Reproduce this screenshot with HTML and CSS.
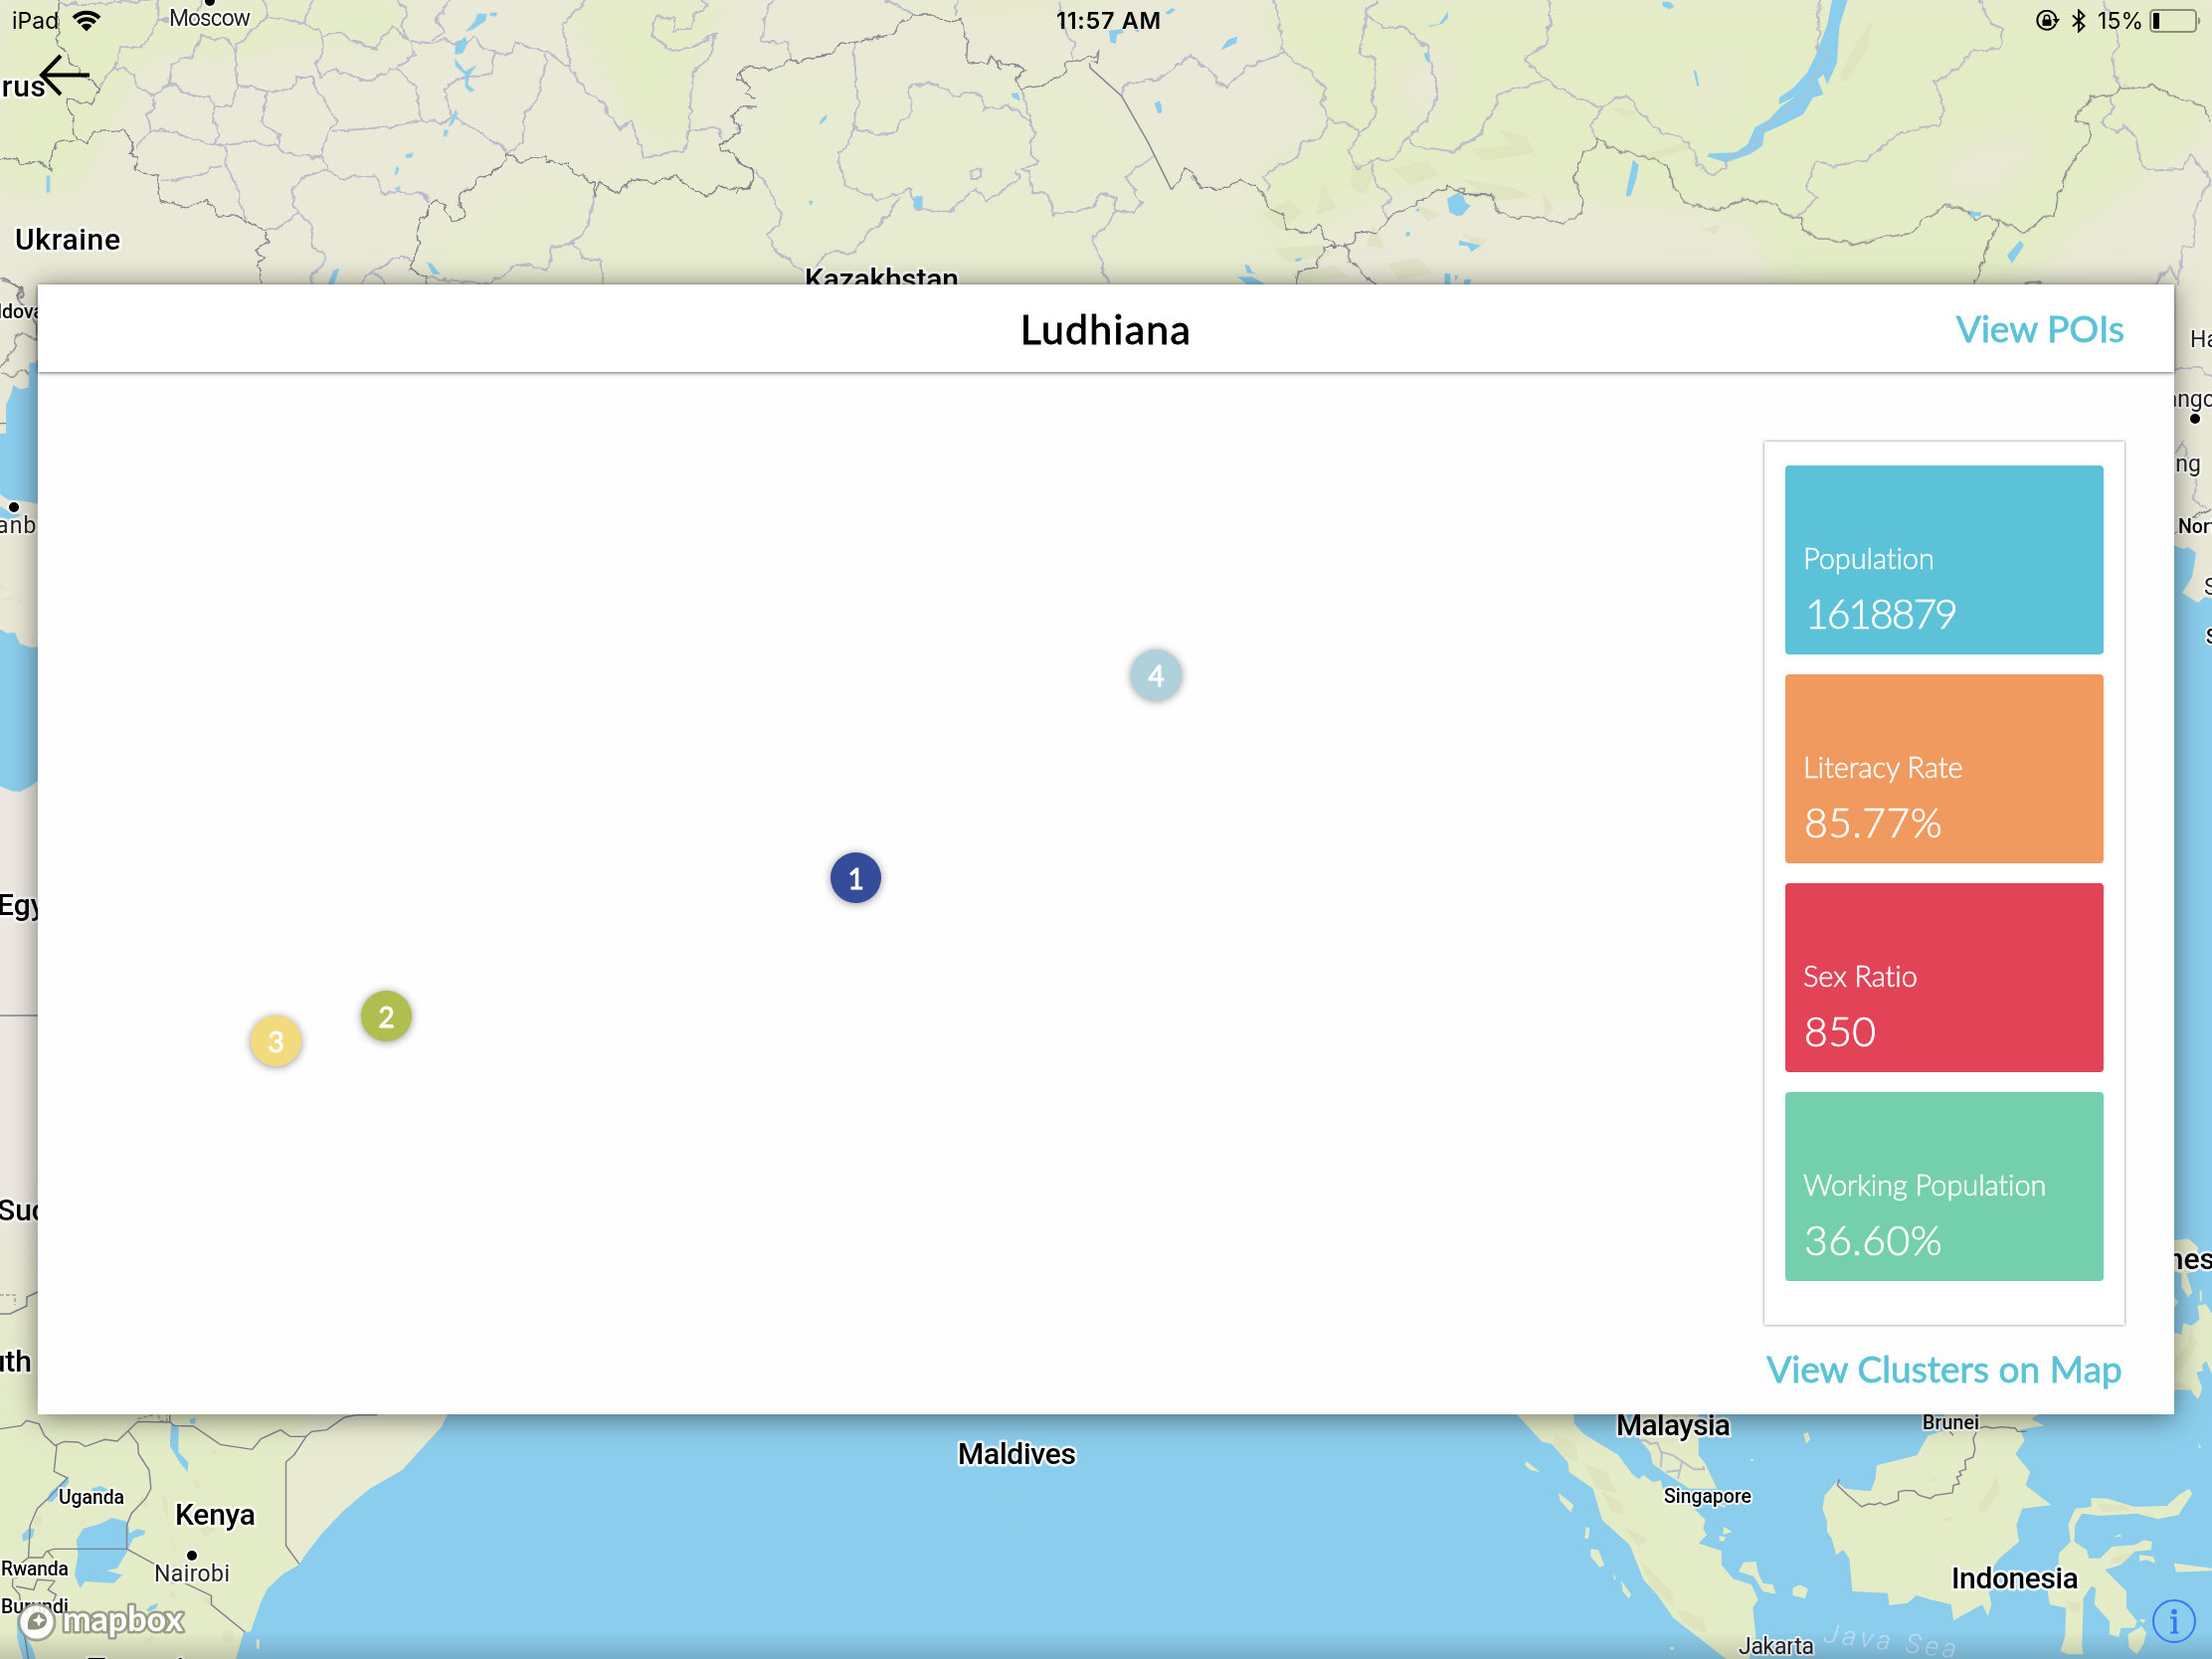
FILE: index.html
```html
<!DOCTYPE html>
<html lang="en">
<head>
<meta charset="utf-8">
<title>Ludhiana</title>
<link rel="stylesheet" href="styles.css">
</head>
<body>
<div class="screen">
  <svg class="map" width="2224" height="1668" viewBox="0 0 2224 1668">
    <defs>
      <filter id="rough" x="0" y="0" width="2224" height="1668" filterUnits="userSpaceOnUse">
        <feTurbulence type="fractalNoise" baseFrequency="0.1" numOctaves="2" seed="4" result="n"/>
        <feDisplacementMap in="SourceGraphic" in2="n" scale="8" xChannelSelector="R" yChannelSelector="G"/>
      </filter>
      <filter id="soft" x="-20%" y="-20%" width="140%" height="140%"><feGaussianBlur stdDeviation="16"/></filter>
      <linearGradient id="foot" x1="0" y1="0" x2="0" y2="1"><stop offset="0" stop-color="#000" stop-opacity="0"/><stop offset="1" stop-color="#000" stop-opacity=".15"/></linearGradient>
      <linearGradient id="sahel" x1="0" y1="0" x2="0" y2="1"><stop offset="0" stop-color="#ede8e2"/><stop offset=".3" stop-color="#e9e9d6"/><stop offset="1" stop-color="#e4ecc5"/></linearGradient>
    </defs>
    <rect class="land" width="2224" height="1668"/>

    <!-- vegetation -->
    <g class="green" filter="url(#soft)">
      <path d="M0,0H420L400,50L300,40L230,60L150,50L120,100L80,190L0,200Z"/>
      <path d="M560,0H740L700,60L690,150L640,130L600,50Z"/>
      <path class="pale" d="M420,240L520,180L740,150L780,60L900,90L1080,60L1180,170L1330,240V300H420Z"/>
      <path d="M1260,0H2224V130L2100,220L2020,300H1790L1760,220L1600,200L1400,190L1300,240L1240,160L1340,130Z"/>
      <path d="M860,0H1110V18H980Z"/>
    </g>
    <g class="sand" filter="url(#soft)">
      <path d="M1170,80L1270,70L1320,130L1240,180L1190,170Z"/>
      <path d="M1400,60L1470,50L1450,110L1410,130Z"/>
      <path d="M1960,150L2060,130L2020,190L1960,210Z"/>
      <path d="M1680,90L1760,60L1720,110Z"/>
    </g>
    <g class="relief">
      <path d="M1360,160l22,14-10,22-14-8zM1400,170l36-8 12,14-30,10zM1330,185l14,24-22,8zM1270,215l26-14 14,12-22,18zM1280,250l50-4 10,10-44,8zM1380,225l14,26-20-4zM1420,205l30 10-14 8zM1300,275l40-8 16,12-50 4zM1480,150l40-4 20 8-50 8zM1470,180l50 8 20 10-40 4zM1505,130l30 8 10 20-20-8zM1550,190l12 20-8 10zM1655,155l40-12 5 6-40 12zM1850,75l14-28 18-26-6 30-20 32zM1620,108l26 4-10 8zM1710,230l20-4-6 10zM1470,235l26 6-10 10zM1396,265l30-6 14 16-34 6z"/>
    </g>

    <!-- regional borders -->
    <g class="region" filter="url(#rough)">
      <g transform="scale(.48469 .33333)">
        <path d="M330,0L328,60 310,110 298,142 250,142 240,205 215,240 207,270M240,205L275,220 292,272 320,290 350,255 358,190 400,170 417,110 475,120 488,165 492,260 480,318 448,318 433,290 400,290 350,250M320,290L320,320 305,345 312,390 282,450M312,390L365,400 440,438 470,435 520,425 575,440 590,460 662,475 682,400 698,360 650,260 650,230 615,232 605,270 555,275 520,265 492,260M555,275L545,370 578,410 578,440M448,318L442,365 455,405 442,438M122,12H205L250,5 328,0M328,60H400L420,0M548,0L556,50 520,100 492,135 488,165M556,50L630,70 650,0M630,70L662,90 670,160 655,195 665,235 695,208 762,245 820,205 860,165 850,125 832,75 845,35 825,0M662,110L700,100 780,150 815,75 850,125 895,130 925,120 965,135 985,105 1000,145 1055,165 1070,130 1135,155 1182,205 1175,130 1168,75 1215,0M895,120L920,100 905,60 935,0M1135,165L1115,300 1085,350 1085,430 1052,462M1025,150L1018,222 945,240 920,275 940,350 990,395 1052,455M820,205L862,260 875,365 920,370 940,350M690,395L745,390 820,380 875,360M1182,205L1215,275 1245,300 1285,390 1310,370 1335,475 1400,460 1420,455 1430,390 1435,220 1470,180 1485,105 1440,140 1390,155 1350,100 1360,55 1400,55 1395,95 1430,85 1445,35 1468,20 1455,0M1430,395L1490,385 1500,420M665,475L682,515 710,540 780,525 795,585 870,580 890,605M682,515L635,530 605,570 615,640 585,685 550,693M615,640L650,685 645,740 675,770 670,800 645,830 650,857M470,440L465,490 490,560 512,665M335,550L385,535 460,500M1232,590L1220,680 1190,730 1145,750 1135,815 1075,795 1015,855 880,838M1190,730L1210,780 1245,785 1250,857M750,857L755,835 790,805 835,770 855,785M780,820L795,857"/>
      </g>
      <g transform="translate(740 0) scale(.48469 .33333)">
        <path d="M78,0L60,50 55,125 108,128 115,185M243,130L250,250 255,315 242,385 300,408 330,400 365,330 360,260 420,250 450,290 505,280 515,330 565,320 610,365 618,400 610,470 628,485 590,515 610,515 615,580 650,590 660,648 740,625 755,580 790,600 785,630 825,645 842,610 810,530 868,465M242,385L235,440 212,460 225,555 295,605 365,568 372,628 440,642 500,568 520,605 590,540 580,515M338,595L320,640 275,705 245,760 185,765 165,820M790,630L765,690 740,715 760,800 770,857M0,390L10,380M45,510L75,590 98,655 68,705 75,745 110,785 140,825M310,0L370,45M460,0L452,50M670,0L682,90 700,130 697,190M590,270L605,330 615,370M800,290L805,255 870,240 910,205 940,165 975,205 1015,265 1060,205 1135,160 1130,90 1115,0M1135,160L1190,215 1225,270 1215,310 1232,360 1290,390 1295,415 1270,455 1290,510 1315,485 1365,480 1390,415 1440,350 1455,280 1435,150 1385,80 1340,85 1305,40 1330,0M1305,40L1295,160 1330,180 1320,300 1330,345 1290,410M1232,360L1210,420 1175,430 1165,475 1090,530 1110,555 1100,580M1390,415L1410,440 1490,458 1540,410 1568,340M1315,490L1330,555 1360,600 1340,620 1350,660M490,515L510,510 505,540 490,540Z"/>
      </g>
      <g transform="translate(1464 0) scale(.48469 .33333)">
        <path d="M190,0L197,50 185,140 145,165 140,180 190,245 115,270 92,285 75,340 50,405 0,452M190,245L250,295 305,320 355,285 380,340 435,405 465,410 495,460 500,495 522,525 560,508 562,478 610,450 635,390 720,295 770,160 750,145 755,0M305,320L280,380 292,420M1085,0L1095,45 1135,90 1130,145 1075,155 1040,210 990,250 1015,320 1000,375 915,405 850,485 785,500 745,490 725,570 750,595 710,650M1345,0L1375,130 1360,190 1380,270M1355,290L1365,320 1340,370 1370,400 1385,380 1410,410 1420,500 1440,515 1505,510 1525,470 1565,540 1530,640 1528,740 1510,745 1495,857M1445,857L1482,805 1495,845"/>
      </g>
      <path d="M2186,371h12l8-3 8,2 10,10M2186,455l10-10 2,14 10,26-2,18 12,8"/>
    </g>

    <!-- national borders -->
    <g class="nation" filter="url(#rough)">
      <g transform="scale(.48469 .33333)">
        <path d="M122,0V90L115,115 135,155 145,185 165,205 170,232 195,245 207,270 190,310 140,298 138,320 150,350 152,400 160,420 120,430 105,470 105,515 90,490 40,495 35,475 0,485M160,420L180,430 195,400 260,395 275,435 270,465 285,475 278,515 325,525 333,605 390,625 430,605 455,655 490,650 550,695 555,730 530,755 548,775 535,800 545,857M0,835L20,850 43,865 43,900M850,813L868,740 865,710 870,665 890,650 890,615 905,602 920,620 940,670 965,650 950,610 955,580 985,560 990,535 1020,525 1050,480 1052,460 1080,490 1130,465 1135,490 1180,490 1190,520 1230,550 1235,595 1240,545 1285,590 1310,540 1355,550 1405,530 1440,575 1465,595 1490,565 1550,570 1565,515 1540,490 1490,440 1535,395 1520,350 1545,320 1568,322M1568,205L1540,200 1530,240 1558,260 1545,285 1568,295M850,813L885,830 880,857"/>
      </g>
      <g transform="translate(740 0) scale(.48469 .33333)">
        <path d="M0,580L28,565 38,515 0,480M0,245L15,245 10,215 30,200 75,208 110,185 200,165 210,135 243,128 325,103 345,70 370,45 412,45 440,70 465,55 480,130 478,190 520,185 530,170 550,210 540,185 600,210 580,240 590,268 630,260 685,215 687,190 745,170 752,155 750,190 733,190"/>
        <path d="M903,572L920,545 930,510 950,520 950,545 970,568 1020,568 1045,542 1080,560 1098,600 1098,625 1135,650 1145,690 1190,705 1210,675 1220,715 1245,745 1280,735 1285,705 1330,700 1350,660 1410,615 1450,577 1475,573 1478,560 1510,585 1568,590M1245,745L1220,745 1205,805 1165,820 1158,857M1265,740L1275,795 1325,857"/>
      </g>
      <g transform="translate(1464 0) scale(.48469 .33333)">
        <path d="M0,570L15,568 15,585 75,590 80,625 92,648 130,655 180,655 215,678 260,645 265,600 243,545 265,462 285,450 292,420 345,462 370,462 440,500 450,565 480,615 540,635 595,602 660,615 685,652 717,657 720,690 745,720 775,720 825,740 880,715 950,700 965,665 1015,622 1045,628 1080,662 1108,648 1145,682 1180,702 1215,658 1240,652 1245,605 1270,510 1290,465 1318,415 1313,372 1285,365 1285,345 1322,290 1350,290 1380,268 1445,260 1510,303 1550,320 1568,370M1127,665L1097,770 1085,805 1085,832 1073,845 1073,857M1180,857L1195,853 1210,857"/>
      </g>
      <g transform="translate(0 250) scale(.33333 .38265)">
        <path d="M0,80L20,88 60,100 55,130 70,150 110,195 110,235 60,225 42,235 42,265 12,295 0,312M0,325L30,335 70,317 95,338"/>
      </g>
      <path d="M2186,536l6-6M2204,521l20-10"/>
    </g>
    <path class="nation" transform="translate(740 0) scale(.48469 .33333)" d="M733,190L735,205 800,290 855,430 903,572"/>

    <!-- west edge: Black Sea, Mediterranean, Egypt, Sudan -->
    <rect x="0" y="1180" width="40" height="260" fill="url(#sahel)"/>
    <g transform="translate(0 250) scale(.33333 .38265)">
      <rect class="desert" x="0" y="1400" width="120" height="1035"/>
      <path class="water" d="M120,285L105,300 88,300 86,365 60,370 40,358 32,385 18,410 18,485 0,486V645L25,660 70,663 120,672ZM0,677L25,690 65,700 30,712 0,705ZM0,1000L20,1010 45,1008 60,1038 95,1048 120,1045V1395L90,1413 60,1427 35,1425 0,1412Z"/>
      <path class="relief" d="M0,880l20,14-20,4zM5,920l40-2-30,8zM50,915l20,18-20-4zM90,1030l15-14-2,20z"/>
      <path class="nation" d="M0,459H18M0,2015H120"/>
    </g>
    <path class="nation" d="M0,1321h10l17-8v-9l11-5h4"/>
    <path class="nation dash" d="M0,1302h15v10"/>

    <!-- east edge: Korea, Pacific, Philippines -->
    <path class="water" d="M2180,546L2195,552 2200,550 2208,556 2204,580 2194,596 2205,603 2210,606 2217,600 2224,602V1668H2180Z"/>
    <g transform="translate(2150 850) scale(.33333 .38265)">
      <path class="isle" d="M90,1040L150,1033 180,1055 175,1120 145,1125 163,1175 150,1187 130,1160 130,1125 108,1120 90,1100ZM108,1185l12,15-12,15zM178,1210l25-5 19,25V1390L205,1355 192,1365 195,1380 175,1385 192,1425 185,1453 165,1450 160,1430 108,1430V1280L130,1285 135,1255 160,1262 185,1245ZM185,1170h6v28h-6z"/>
      <path class="relief" d="M108,1350l40-40 10-40 20,40-30,50-40,30zM108,1405l50,20-4,12-46-15z"/>
    </g>

    <!-- Indian Ocean -->
    <path class="water" d="M451,1420L444,1434 404,1478 371,1497 345,1519 325,1540 312,1554 301,1573 285,1582 269,1597 262,1611 252,1640 245,1641 237,1668H2224V1400H451Z"/>
    <path class="veg" d="M0,1415H451L444,1434 404,1478 371,1497 345,1519 325,1540 312,1554 301,1573 285,1582 269,1597 262,1611 252,1640 245,1641 237,1668H0Z"/>
    <path class="coast" d="M310,1420H449L444,1434 404,1478 371,1497 345,1519 325,1540 301,1571L289,1554V1470Z"/>
    <g transform="translate(0 1410) scale(.35714 .33333)">
      <path class="relief" d="M400,280l15,10v30l-25-10zM455,280l15,10 5,60-15-30zM560,380l30-20 15,25-30,20zM100,345l20-10-5,35-20,5zM480,400l20,60-10-10zM540,230l25,10-5,30zM595,150l15,-10-5,20zM470,580l20-15 5,30zM560,585l40,5-10,20zM625,690l25-5 10,30-25,10zM410,715l20-10-5,20z"/>
      <path class="water" d="M482,65L503,70 502,150 530,180 528,210 505,180 478,130ZM535,52l15-6v18h-15zM190,225l5,15-48,60-15-3 8-25zM62,400l18-20 17,2-5,25-27,12zM215,415L235,380 285,365 315,348 360,360 365,395 385,382 410,388 405,400 375,410 358,450 330,500 300,508 345,520 320,545 240,540 225,560 210,520 220,460ZM258,260l25-8 22,12-20,8-25,0zM412,625l15-12 18-8-5,15-20,12zM48,645l20,10 10,60 15,30 8,30H65L48,710ZM36,532h14l-5,-8zM480,542l8,8v-14z"/>
      <path class="isle" d="M722,715l8,0v28h-8z"/>
      <g class="nation">
        <path d="M0,80L60,70 75,55 110,65 125,100 155,130 180,118 220,120 240,133 295,112 330,117 388,58 480,60 490,70 545,72 620,127 710,142 735,110 790,83 817,103 862,103 877,88 920,83 970,45 1005,38H1062M862,103L828,158 805,180V432L843,488M360,85L388,125 390,155 420,205 425,260 410,290 370,335 357,370V442H152L130,450 120,468 80,468 85,370 105,320 135,290 190,228 152,208 160,130M357,442L435,488M520,545L595,583 595,610 690,693M80,468L60,485M135,450L150,470M36,532L35,555 55,580 60,640M45,555L95,565 105,535 155,538M155,538L135,565 158,580 150,600M60,640L80,774M478,38V60"/>
        <path class="dash" d="M388,50L430,38M445,38l5,18h20v-18"/>
      </g>
    </g>

    <!-- Sumatra, Malay peninsula, Borneo, Sulawesi -->
    <g transform="translate(1500 1400) scale(.46173 .33333)">
      <path class="isle" d="M52,62H178L180,95 200,125 235,155 275,188 305,245 320,262 330,248 350,270 368,265 372,290 395,300 440,350 465,385 460,410 468,430 450,455 500,478 500,520 525,562 565,580 580,625 568,650 575,740 560,804H510L460,750 395,680 360,610 330,565 300,460 240,385 220,290 168,240 165,210 130,155 108,148ZM330,62H450V190L465,215 490,290H430L380,245 350,215 345,180 320,140ZM490,340l18,-2v10zM75,208L105,240 85,235 72,220ZM145,303L178,340 172,363 148,325ZM215,472L232,475 245,522 235,527 215,495ZM205,405l8,5-3,30h-8zM262,548l8,10-2,10zM282,568L303,610 298,622 285,600ZM505,405l18,15-20,10zM495,432l15,5-5,12-10-2zM537,540L548,512 575,510 580,545 590,575 612,580 618,608 590,600 570,555ZM655,590L670,580 688,592 682,622 655,612ZM678,125l10-5 5,20-8,15zM563,202h7v5h-7zM388,768h8v8h-8z"/>
      <path class="isle" d="M985,62H1195L1175,80 1203,100 1150,112 1160,145 1140,185 1172,240 1162,280 1218,340 1155,350 1142,400 1148,450 1105,500 1085,540 1082,600 1088,640 1080,675 1068,640 1005,688 1000,640 955,625 925,612 905,635 865,642 862,605 785,600 778,500 765,475 750,490 740,440 730,420 730,390 720,350 725,310 750,270 770,290 825,298 835,260 838,220 925,190 950,130 985,115ZM1305,318L1340,320 1400,345 1470,342 1495,310 1518,290 1525,305 1495,370 1450,382 1405,365 1325,372 1285,365 1270,400 1268,450 1295,475 1300,500 1325,500 1350,465 1400,460 1420,445 1438,450 1435,475 1400,480 1370,520 1335,535 1360,570 1382,600 1382,650 1405,690 1400,710 1370,710 1365,738 1345,730 1345,690 1312,640 1315,590 1305,585 1288,620 1285,765 1288,790 1255,790 1238,780 1248,735 1250,650 1215,640 1210,600 1230,570 1235,485 1260,450 1255,400 1270,350 1305,345ZM1410,490l30,5 5,20-20-10-15,5zM1485,515L1568,530V538L1490,542ZM1353,435l15-7 3,8zM1385,730l30-25 10,20-5,30-15,35-18-20zM1410,685h14l-6,12zM1525,0h20l-8,20zM1538,150l7,20-5-3z"/>
      <path class="relief" d="M140,130l40,20 10,60-40-20-20-40zM200,215l50,25 20,60-40-10zM240,300l40,30 10,40-30-10zM290,410l50,30-20,30zM320,500l70,100 10,50-50-60zM400,650l60,30 10,50-50-30zM1060,340l30-60 10-40 5,60-30,60-15,0zM980,380l30-8-20,20zM1350,500l50-20-20,30-30,10zM1250,630l30,5v30l-20-5zM960,255l10,10-12,5zM1320,335l60,5 10,15-60,5z"/>
      <g class="nation"><path d="M757,262L752,280 775,310 805,345 820,336 835,338 845,332 855,340 870,333 885,325 885,300 900,295 920,297 930,310 955,320 965,310 1003,303 1005,280 1018,275 1012,255 1022,250 1018,238 1032,232 1030,205 1048,195 1052,170 1048,140 1055,120M1055,110L1075,103 1090,108 1110,104 1140,108 1145,118H1165M1005,130l-8-12"/></g>
      <g class="region"><path d="M320,145L335,145 345,155 360,152 370,185 368,225M370,180L395,190 440,232 462,232 460,222M415,205L405,260M380,240l28-5"/></g>
    </g>

    <!-- lakes -->
    <g class="water">
      <g transform="scale(.48469 .33333)"><path d="M965,95L985,65 990,42 1010,42 1008,62 980,90ZM1018,38l14,0-3,12-14-4zM965,110L970,130 960,160 943,165 945,135ZM943,175L965,215 990,195 975,225 970,255 985,272 975,278 965,262 965,225 945,200ZM945,330l5,12-12,35-8,5zM922,390l8,3-3,18-8,0zM842,465l15-5-3,15-12,2zM822,500l6,8-5,20-4,0zM830,560l-1,15-13,-5zM97,530h7l-1,50h-7zM885,790l10,5 18,32-15,0zM692,815l12-5-12,50h-12z"/></g>
      <g transform="translate(740 0) scale(.48469 .33333)"><path d="M890,38l15-14 7,6-15,15zM773,92L800,88 805,98 790,105 788,132 777,128ZM826,90l12,0-4,8zM1005,152L1020,120 1040,110 1038,130ZM868,312l10-8 5,15v22h-8zM1434,78l25-6 18-38v20l-12,18-25,8zM1426,160l10,0 4,30-8,-6zM570,282l15-2 5,25-15-10zM173,372l5-15 11-12-2,15-12,15zM150,605l10,2-5,14zM372,592h15v38l-20-5zM1475,600L1500,580 1512,610 1525,622 1510,630 1495,652 1480,640ZM1410,630l8,0-3,12zM1390,700l8-2 0,12-8,4zM1500,725L1545,740 1525,760 1518,742 1500,740ZM1160,780l15-3-5,12-10,0zM1055,797l10,5 5,18 10,6-20-3zM1040,835L1070,835 1098,857H1060ZM1470,825l12,0v32h-12zM1490,830h8l-5,20zM1510,842h15l-3,15h-12z"/></g>
      <g transform="translate(1464 0) scale(.48469 .33333)">
        <path d="M780,0H812L795,80 790,190 770,255 762,225 750,240 762,285 740,295 720,345 665,385 640,400 635,440 610,465 560,490 520,472 525,463 580,460 605,435 620,385 650,360 675,320 705,290 670,315 670,295 700,265 728,220 745,170 770,75ZM428,5l15,0 10,15-10,8-15-10zM492,210l6,5 6,43-4,2zM367,482l12,15-5,40-12,55-10,0 5-40zM1068,632l8,8 14,0-2,12-12,0-8,8zM1170,725l8,15-25,55-10-25zM0,585l15,5 5,25 10,5-18,30H0z"/>
        <path class="lake-line" d="M750,145L770,160 720,295 635,390 610,450 562,478"/>
      </g>
    </g>

    <!-- place labels -->
    <g class="dots"><circle cx="211" cy="1" r="5"/><circle cx="14" cy="510" r="5"/><circle cx="2207" cy="421" r="5"/><circle cx="193" cy="1564" r="5"/></g>
    <g class="city">
      <text x="170" y="26" textLength="82">Moscow</text>
      <text x="-33" y="536" textLength="90">Istanbul</text>
      <text x="2202" y="349">Harbin</text>
      <text x="2149" y="409">Changchun</text>
      <text x="2213" y="474" text-anchor="end">Shenyang</text>
      <text x="2216" y="598">Seoul</text>
      <text x="155" y="1590" textLength="76">Nairobi</text>
      <text x="1748" y="1663" textLength="76">Jakarta</text>
    </g>
    <g class="small">
      <text x="44" y="320" text-anchor="end">Moldova</text>
      <text x="2190" y="536">North Korea</text>
      <text x="2218" y="647">South Korea</text>
      <text x="1933" y="1437" textLength="57">Brunei</text>
      <text x="1673" y="1511" textLength="88">Singapore</text>
      <text x="59" y="1512" textLength="66">Uganda</text>
      <text x="1" y="1584" textLength="68">Rwanda</text>
      <text x="1" y="1622" textLength="68">Burundi</text>
    </g>
    <g class="country">
      <text x="-60" y="97" textLength="106">Belarus</text>
      <text x="15" y="251" textLength="106">Ukraine</text>
      <text x="809" y="291" textLength="155">Kazakhstan</text>
      <text x="-3" y="920">Egypt</text>
      <text x="-3" y="1227">Sudan</text>
      <text x="32" y="1379" text-anchor="end">South</text>
      <text x="2227" y="1276" text-anchor="end">Philippines</text>
      <text x="1625" y="1443" textLength="115">Malaysia</text>
      <text x="1962" y="1597" textLength="128">Indonesia</text>
      <text x="963" y="1472" textLength="119">Maldives</text>
      <text x="176" y="1533" textLength="81">Kenya</text>
      <text x="88" y="1688" textLength="112">Tanzania</text>
    </g>
    <text class="sea" textLength="134" transform="translate(1833 1651) rotate(7)">Java Sea</text>
    <path class="atoll" d="M1008,1502h18M1016,1538h10"/>
    <rect x="0" y="1642" width="2224" height="26" fill="url(#foot)"/>
  </svg>

  <header class="status">
    <div class="status-left">
      <span>iPad</span>
      <svg width="30" height="22" viewBox="0 0 30 22"><path d="M2,8.2A18.500,18.500 0 0 1 28,8.2M6.500,12.900A12,12 0 0 1 23.500,12.900" fill="none" stroke="#000" stroke-width="4"/><path d="M9.600,16A7.600,7.600 0 0 1 20.400,16L15,21.500Z"/></svg>
    </div>
    <div class="time">11:57 AM</div>
    <div class="status-right">
      <svg width="24" height="22" viewBox="0 0 24 22"><path d="M19.700,13.800A9.500,9.500 0 1 1 20.300,9" fill="none" stroke="#000" stroke-width="2"/><path d="M16.800,9H24L20.500,14Z"/><rect x="6.500" y="9.500" width="9" height="6.500" rx="1"/><path d="M8.300,10V8a2.700,2.700 0 0 1 5.400,0v2" fill="none" stroke="#000" stroke-width="1.500"/></svg>
      <svg width="14" height="24" viewBox="0 0 14 24"><path d="M1,6.500L12.500,17 7,22.500V1.500L12.500,7 1,17.500" fill="none" stroke="#000" stroke-width="2"/></svg>
      <span class="charge">15%</span>
      <svg width="52" height="24" viewBox="0 0 52 24"><rect x="1" y="1" width="46" height="22" rx="4" fill="none" stroke="#8b8e7c" stroke-width="2"/><rect x="4" y="4" width="6" height="16" rx="1"/><path d="M49,8a4.500,4.500 0 0 1 0,8z" fill="#8b8e7c"/></svg>
    </div>
  </header>
  <nav class="nav">
    <svg width="54" height="44" viewBox="0 0 54 44"><path d="M52,22.500H4M23,3L4,22.500 23,42" fill="none" stroke="#000" stroke-width="4"/></svg>
  </nav>

  <main class="card">
    <div class="card-head">
      <h1 class="title">Ludhiana</h1>
      <a class="link pois">View POIs</a>
    </div>
    <div class="card-body">
      <section class="plot">
        <span class="pin pin-1">1</span>
        <span class="pin pin-2">2</span>
        <span class="pin pin-3">3</span>
        <span class="pin pin-4">4</span>
      </section>
      <aside class="side">
        <div class="stats">
          <div class="tile blue"><span class="label">Population</span><span class="value tight">1618879</span></div>
          <div class="tile orange"><span class="label">Literacy Rate</span><span class="value">85.77%</span></div>
          <div class="tile red"><span class="label">Sex Ratio</span><span class="value">850</span></div>
          <div class="tile green-tile"><span class="label">Working Population</span><span class="value">36.60%</span></div>
        </div>
        <a class="link clusters">View Clusters on Map</a>
      </aside>
    </div>
  </main>

  <svg class="mapbox" width="180" height="48" viewBox="0 0 180 48">
    <circle cx="22" cy="24" r="18" fill="#fff" fill-opacity=".92" stroke="#8c907a" stroke-width="3" stroke-opacity=".8"/>
    <path d="M13,31C12,20 16,14 24,14A8.500,8.500 0 0 1 32,23C31,30 23,33 13,31Z" fill="#8c907a"/>
    <path d="M24,15.500l1.900,4.600L30.500,22l-4.600,1.900L24,28.500l-1.900-4.600L17.500,22l4.600-1.900Z" fill="#fff"/>
    <text x="48" y="33" textLength="121" lengthAdjust="spacingAndGlyphs">mapbox</text>
  </svg>
  <svg class="info" width="46" height="46" viewBox="0 0 46 46"><circle cx="23" cy="23" r="21" fill="none" stroke="#3478f6" stroke-width="2"/><circle cx="23" cy="13.500" r="2.800" fill="#3478f6"/><path d="M19,19.500h5.500V34M19,34.500h8.500" fill="none" stroke="#3478f6" stroke-width="2"/><path d="M23.500,19v15" stroke="#3478f6" stroke-width="3"/></svg>
</div>
</body>
</html>
```
FILE: styles.css
```css
* { box-sizing: border-box; }
body { margin: 0; background: #fff; }
.screen {
  position: relative;
  width: 2224px;
  height: 1668px;
  overflow: hidden;
  font-family: Lato, "Liberation Sans", sans-serif;
}

/* map */
.map { position: absolute; inset: 0; }
.map path { vector-effect: non-scaling-stroke; }
.land { fill: #eae9d7; }
.green path { fill: #e4ecc5; }
.green .pale { fill: #e7ebcf; }
.sand path { fill: #eae8d7; }
.desert { fill: #ede8e2; }
.veg { fill: #e4ebc7; }
.coast { fill: #e8ead1; }
.isle { fill: #e4ebc7; }
.relief { fill: #d9deb6; fill-opacity: .5; }
.water { fill: #8bcdec; }
.region path { fill: none; stroke: #babbcb; stroke-width: 2; }
.nation path, path.nation { fill: none; stroke: #80818c; stroke-width: 1.4; }
.nation .dash, path.dash { stroke-dasharray: 4 2; stroke-opacity: .7; }
.lake-line { fill: none; stroke: #b1bfd4; stroke-width: 1.6; }
.dots circle { fill: #000; stroke: #fff; stroke-opacity: .8; stroke-width: 4; paint-order: stroke; }
.map text {
  font-family: Roboto, "Open Sans", sans-serif;
  stroke: #fff;
  stroke-opacity: .85;
  stroke-linejoin: round;
  paint-order: stroke;
}
.city text { font-size: 23px; fill: #222; stroke-width: 4px; }
.small text { font-size: 19.5px; font-weight: 500; fill: #000; stroke-width: 4px; }
.country text { font-size: 30px; font-weight: 500; fill: #000; stroke-width: 5px; }
.map .sea { font-size: 27px; font-style: italic; font-weight: 300; fill: #c4e1f8; stroke: none; }
.atoll { stroke: #9fc6de; stroke-width: 1; stroke-dasharray: 3 2; }

/* status bar */
.status {
  position: relative;
  display: grid;
  grid-template-columns: 1fr auto 1fr;
  align-items: center;
  height: 41px;
  padding: 0 11px 0 12px;
  font-family: Inter, sans-serif;
  font-size: 23px;
  line-height: 28px;
}
.status-left, .status-right { display: flex; align-items: center; }
.status-left { gap: 13px; }
.status-right { justify-content: flex-end; gap: 12px; }
.time { font-size: 23.5px; font-weight: 600; letter-spacing: .7px; padding-left: 5px; }
.charge { margin-right: -6px; letter-spacing: 0; }
.nav { position: relative; display: flex; height: 245px; padding: 12px 0 0 38px; }

/* card */
.card {
  position: relative;
  display: flex;
  flex-direction: column;
  width: 2148px;
  height: 1136px;
  margin-left: 38px;
  background: #fefefe;
  box-shadow: 0 3px 26px rgba(0, 0, 0, .5);
}
.card-head {
  display: grid;
  grid-template-columns: 1fr auto 1fr;
  align-items: center;
  height: 88px;
  padding: 0 50px;
  background: #fff;
  box-shadow: 0 1px 4px rgba(0, 0, 0, .6);
}
.title {
  grid-column: 2;
  margin: 0;
  padding-top: 2px;
  font-size: 41px;
  font-weight: 400;
  line-height: 50px;
  letter-spacing: 1.3px;
  -webkit-text-stroke: .8px #000;
}
.link {
  color: #5bc2d7;
  font-size: 37px;
  line-height: 46px;
  letter-spacing: .05px;
  white-space: nowrap;
  -webkit-text-stroke: .8px #5bc2d7;
}
.pois { justify-self: end; }
.card-body { display: flex; flex: 1; padding-right: 50px; }
.plot { position: relative; flex: 1; }
.side { display: flex; flex-direction: column; align-items: center; width: 362px; padding-top: 70px; }
.stats {
  display: flex;
  flex-direction: column;
  gap: 20px;
  width: 362px;
  height: 888px;
  padding: 24px 21px;
  background: #fff;
  box-shadow: 0 0 3px rgba(0, 0, 0, .5);
}
.tile {
  display: flex;
  flex-direction: column;
  justify-content: flex-end;
  gap: 13px;
  height: 190px;
  padding: 0 18px 16px;
  border-radius: 4px;
  color: #fff;
}
.blue { background: #5bc2d7; }
.orange { background: #f19a60; }
.red { background: #e24357; }
.green-tile { background: #74cfac; }
.label { font-size: 29px; line-height: 36px; letter-spacing: -.1px; white-space: nowrap; font-weight: 300; -webkit-text-stroke: .5px #fff; }
.value { padding-left: 1px; font-size: 41px; line-height: 50px; letter-spacing: .4px; font-weight: 300; -webkit-text-stroke: .6px #fff; }
.tight { letter-spacing: -2.1px; padding-left: 2px; }
.clusters { margin-top: 21px; }

/* cluster pins */
.pin {
  position: absolute;
  width: 51px;
  height: 51px;
  border-radius: 50%;
  color: #fff;
  font-size: 28px;
  font-weight: 400;
  line-height: 53px;
  text-align: center;
  -webkit-text-stroke: .9px #fff;
  box-shadow: 0 1px 9px rgba(0, 0, 0, .42);
}
.pin-1 { left: 797px; top: 483px; background: #344c9a; }
.pin-2 { left: 325px; top: 622px; background: #b0be50; }
.pin-3 { left: 214px; top: 647px; background: #f2da7e; }
.pin-4 { left: 1099px; top: 279px; background: #aed1db; }

/* overlays */
.mapbox { position: absolute; left: 15px; top: 1607px; }
.mapbox text {
  font-family: Lato, sans-serif;
  font-size: 34px;
  font-weight: 700;
  fill: #fff;
  stroke: #8c907a;
  stroke-opacity: .85;
  stroke-width: 5px;
  stroke-linejoin: round;
  paint-order: stroke;
}
.info { position: absolute; left: 2163px; top: 1607px; }
```
